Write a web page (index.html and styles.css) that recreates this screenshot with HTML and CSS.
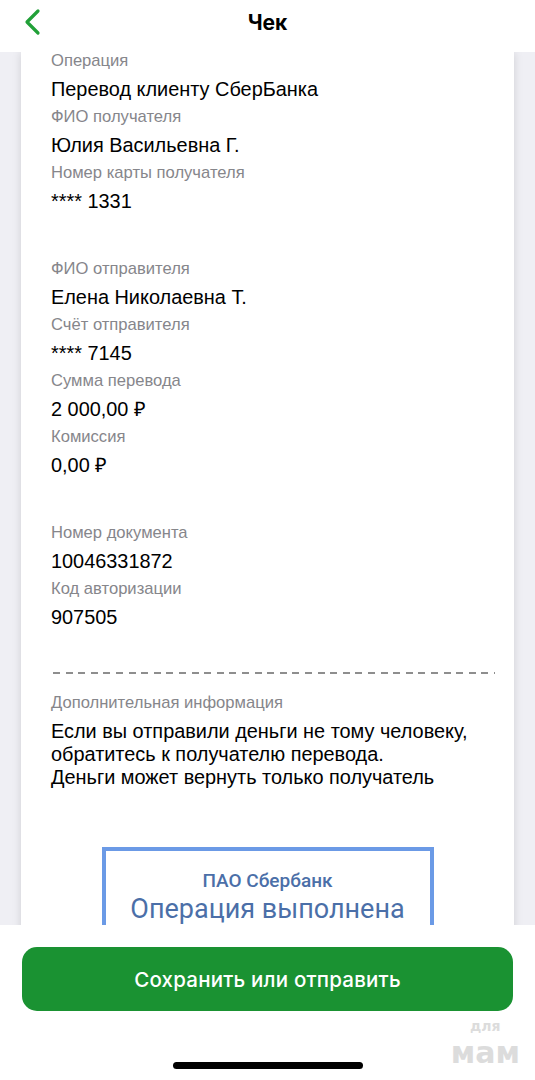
FILE: index.html
```html
<!DOCTYPE html>
<html lang="ru">
<head>
<meta charset="UTF-8">
<title>Чек</title>
<meta name="viewport" content="width=device-width, initial-scale=1.0">
<link rel="stylesheet" href="styles.css">
</head>
<body>
<!-- шапка -->
<div class="topbar">
  <a class="back" href="#">
    <svg width="20" height="28" viewBox="0 0 20 28"><path d="M16 3 L5 14 L16 25" fill="none" stroke="#21a038" stroke-width="3.2" stroke-linecap="round" stroke-linejoin="round"/></svg>
  </a>
  <div class="title">Чек</div>
  <div></div>
</div>

<div class="scroll">
  <div class="receipt">
    <div class="group">
      <div class="label">Операция</div>
      <div class="value">Перевод клиенту СберБанка</div>
      <div class="label">ФИО получателя</div>
      <div class="value">Юлия Васильевна Г.</div>
      <div class="label">Номер карты получателя</div>
      <div class="value">**** 1331</div>
    </div>
    <div class="group">
      <div class="label">ФИО отправителя</div>
      <div class="value">Елена Николаевна Т.</div>
      <div class="label">Счёт отправителя</div>
      <div class="value">**** 7145</div>
      <div class="label">Сумма перевода</div>
      <div class="value">2 000,00 ₽</div>
      <div class="label">Комиссия</div>
      <div class="value">0,00 ₽</div>
    </div>
    <div class="group">
      <div class="label">Номер документа</div>
      <div class="value">10046331872</div>
      <div class="label">Код авторизации</div>
      <div class="value">907505</div>
    </div>

    <div class="dashes"></div>

    <div class="label">Дополнительная информация</div>
    <div class="note">Если вы отправили деньги не тому человеку,<br>обратитесь к получателю перевода.<br>Деньги может вернуть только получатель</div>

    <div class="stamp">
      <div class="stamp-bank">ПАО Сбербанк</div>
      <div class="stamp-status">Операция выполнена</div>
    </div>
  </div>
</div>

<div class="bottom">
  <button class="send">Сохранить или отправить</button>
  <div class="home-bar"></div>
  <div class="wm">
    <div class="wm-top">для</div>
    <div class="wm-main">мам</div>
  </div>
</div>
</body>
</html>
```

FILE: styles.css
```css
html, body {
margin: 0;
padding: 0;
height: 100%;
}
body {
width: 535px;
height: 1080px;
overflow: hidden;
background: #fff;
font-family: "Liberation Sans", Arial, sans-serif;
color: #000;
display: flex;
flex-direction: column;
}

/* шапка */
.topbar {
height: 52px;
flex: none;
display: grid;
grid-template-columns: 60px 1fr 60px;
align-items: center;
background: #fff;
position: relative;
z-index: 2;
}
.back {
display: flex;
align-items: center;
padding-left: 22px;
height: 44px;
margin-top: -8px;
}
.title {
text-align: center;
font-family: Inter, "Liberation Sans", sans-serif;
font-weight: 700;
font-size: 21px;
margin-top: -8px;
}

/* лента чека */
.scroll {
height: 873px;
flex: none;
overflow: hidden;
background: #efeff4;
padding: 0 21px;
}
.receipt {
background: #fff;
min-height: 100%;
padding: 0 30px 40px 30px;
box-shadow: 0 0 9px rgba(0, 0, 0, 0.13);
}
.group + .group { margin-top: 40px; }
.label {
font-size: 16.6px;
line-height: 18px;
color: #86868b;
}
.value {
font-size: 19.9px;
line-height: 38px;
}
.dashes {
height: 2px;
margin: 36px 0 20px 2px;
background: repeating-linear-gradient(90deg, #8e8e8e 0 7px, transparent 7px 12.6px);
width: 442px;
}
.note {
margin-top: 8px;
font-size: 19.9px;
line-height: 23px;
}

.stamp {
width: 324px;
margin: 58px auto 0 auto;
border: 4px solid #6b9ae6;
padding-top: 18px;
padding-bottom: 30px;
text-align: center;
font-family: Roboto, "Liberation Sans", sans-serif;
color: #4b6fa8;
}
.stamp-bank {
font-size: 19px;
font-weight: 500;
line-height: 24px;
}
.stamp-status {
font-size: 27px;
line-height: 33px;
}

/* низ экрана */
.bottom {
flex: 1;
background: #fff;
position: relative;
padding: 22px 22px 0 22px;
}
.send {
display: block;
width: 100%;
height: 64px;
border: none;
border-radius: 15px;
background: #1a9232;
color: #fff;
font-family: Inter, "Liberation Sans", sans-serif;
font-size: 20.5px;
font-weight: 500;
letter-spacing: 0.2px;
cursor: pointer;
}
.home-bar {
width: 190px;
height: 7px;
border-radius: 4px;
background: #000;
margin: 51px auto 0 auto;
}
.wm {
position: absolute;
right: 15px;
bottom: 10px;
display: flex;
flex-direction: column;
align-items: center;
font-family: "DejaVu Sans", sans-serif;
font-weight: 700;
color: #dcdcdc;
}
.wm-top {
font-size: 14px;
line-height: 17px;
}
.wm-main {
font-size: 30px;
line-height: 35px;
}
```
